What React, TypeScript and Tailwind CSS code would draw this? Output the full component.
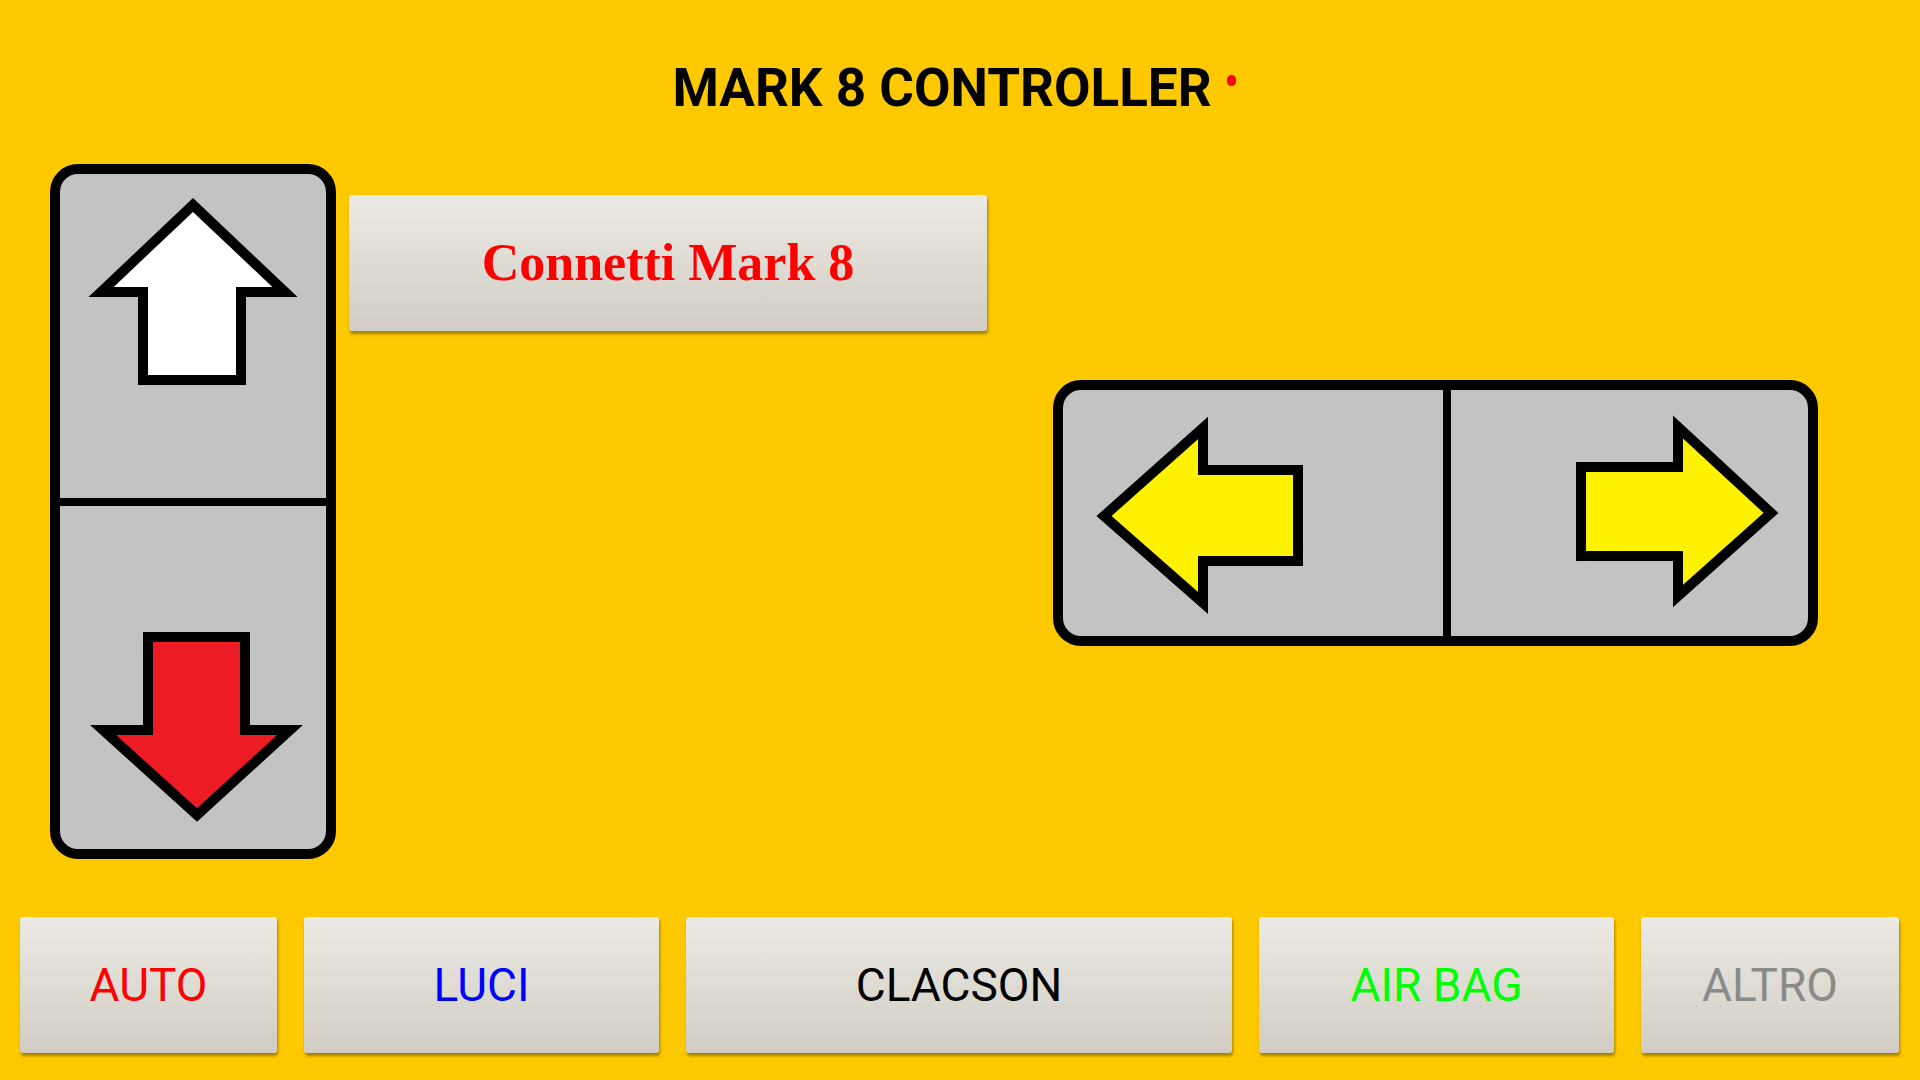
import React from "react";

const btn =
  "flex items-center justify-center h-[136px] rounded-[3px] bg-linear-to-b from-[#ECEAE4] to-[#D1CDC4] shadow-[1px_3px_3px_rgba(90,70,0,0.55)]";

function Arrow({ w, h, points, fill }: { w: number; h: number; points: string; fill: string }) {
  return (
    <svg width={w} height={h} viewBox={`0 0 ${w} ${h}`} className="block">
      <polygon points={points} fill={fill} stroke="#000" strokeWidth={10} strokeLinejoin="miter" strokeMiterlimit={4} />
    </svg>
  );
}

export default function App() {
  return (
    <div className="w-[1920px] h-[1080px] bg-[#FFC900] flex flex-col overflow-hidden" style={{ fontFamily: "Roboto, 'Liberation Sans', sans-serif" }}>
      {/* Title */}
      <div className="h-[164px] flex justify-center pt-[62px] pr-[36px]">
        <div className="relative">
          <span className="text-[53px] leading-none font-bold text-black">MARK 8 CONTROLLER</span>
          <span className="absolute right-[-24px] top-[13px] w-[9px] h-[11px] rounded-full bg-[#FF0000] blur-[0.6px]"></span>
        </div>
      </div>

      {/* Middle */}
      <div className="flex h-[695px]">
        {/* Vertical panel */}
        <div className="ml-[50px] w-[286px] h-[695px] border-[10px] border-black rounded-[28px] bg-[#C3C3C3] flex flex-col overflow-hidden">
          <div className="h-[324px]">
            <Arrow w={266} h={324} fill="#FFFFFF" points="133,31 225,118 181,118 181,206 83,206 83,118 41,118" />
          </div>
          <div className="h-[8px] bg-black"></div>
          <div className="flex-1">
            <Arrow w={266} h={343} fill="#ED1C24" points="88,131 185,131 185,224 230,224 137,309 43,224 88,224" />
          </div>
        </div>

        {/* Connetti button */}
        <div className="ml-[13px] mt-[31px]">
          <div className={`${btn} w-[638px]`}>
            <span className="text-[52px] font-bold text-[#FF0000]" style={{ fontFamily: "'Liberation Serif', serif" }}>
              Connetti Mark 8
            </span>
          </div>
        </div>

        {/* Horizontal panel */}
        <div className="ml-[66px] mt-[216px] w-[765px] h-[266px] border-[10px] border-black rounded-[28px] bg-[#C3C3C3] flex overflow-hidden">
          <div className="w-[380px]">
            <Arrow w={380} h={246} fill="#FFF200" points="41,126 140,38 140,80 235,80 235,171 140,171 140,213" />
          </div>
          <div className="w-[8px] bg-black"></div>
          <div className="flex-1">
            <Arrow w={357} h={246} fill="#FFF200" points="320,123 227,37 227,77 130,77 130,166 227,166 227,206" />
          </div>
        </div>
      </div>

      {/* Bottom buttons */}
      <div className="mt-[58px] flex pl-[20px] gap-[27px] text-[46px]">
        <div className={`${btn} w-[257px] text-[#FF0000]`}>AUTO</div>
        <div className={`${btn} w-[355px] text-[#0000FF]`}>LUCI</div>
        <div className={`${btn} w-[546px] text-black`}>CLACSON</div>
        <div className={`${btn} w-[355px] text-[#00FF00]`}>AIR BAG</div>
        <div className={`${btn} w-[258px] text-[#8A8A8A]`}>ALTRO</div>
      </div>
    </div>
  );
}
